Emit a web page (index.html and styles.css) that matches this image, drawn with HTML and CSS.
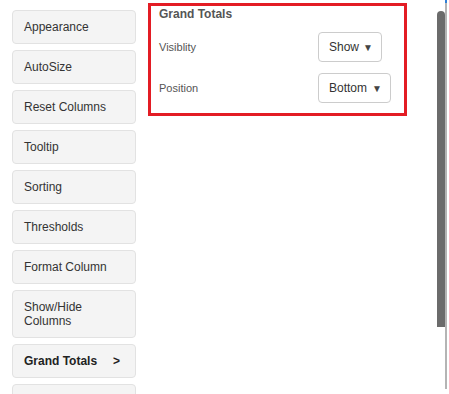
FILE: index.html
```html
<!DOCTYPE html>
<html lang="en">
<head>
    <meta charset="UTF-8">
    <meta name="viewport" content="width=device-width, initial-scale=1.0">
    <title>Table Settings</title>
    <link rel="stylesheet" href="styles.css">
</head>
<body>
    <div class="layout">
        <div class="sidebar">
            <div class="menu-item">Appearance</div>
            <div class="menu-item">AutoSize</div>
            <div class="menu-item">Reset Columns</div>
            <div class="menu-item">Tooltip</div>
            <div class="menu-item">Sorting</div>
            <div class="menu-item">Thresholds</div>
            <div class="menu-item">Format Column</div>
            <div class="menu-item">Show/Hide Columns</div>
            <div class="menu-item active"><span>Grand Totals</span><span>&gt;</span></div>
            <div class="menu-item empty"></div>
        </div>

        <div class="panel">
            <h2>Grand Totals</h2>
            <div class="form-row">
                <label>Visiblity</label>
                <div class="select-box show-select"><span>Show</span><span class="arrow">&#9660;</span></div>
            </div>
            <div class="form-row">
                <label>Position</label>
                <div class="select-box pos-select"><span>Bottom</span><span class="arrow">&#9660;</span></div>
            </div>
        </div>

        <div class="scrollbar">
            <div class="thumb"></div>
            <div class="track"></div>
        </div>
    </div>
</body>
</html>
```

FILE: styles.css
```css
body {
    font-family: "Liberation Sans", Arial, sans-serif;
    margin: 0;
    padding: 0;
    height: 394px;
    overflow: hidden;
    background: #fff;
    color: #333;
}

.layout {
    display: flex;
    align-items: flex-start;
    padding-left: 12px;
}

.sidebar {
    width: 124px;
    margin-top: 10px;
    display: flex;
    flex-direction: column;
    gap: 6px;
}

.menu-item {
    display: flex;
    justify-content: space-between;
    padding: 9px 15px 9px 11px;
    font-size: 12px;
    line-height: 14px;
    background: #f4f4f4;
    border: 1px solid #e2e2e2;
    border-radius: 4px;
    color: #333;
}

.menu-item.empty {
    height: 14px;
}

.menu-item.active {
    font-weight: bold;
    color: #222;
}

.panel {
    width: 259px;
    box-sizing: border-box;
    margin-left: 12px;
    margin-top: 3px;
    border: 3px solid #e31c24;
    padding: 1px 8px 10px;
}

h2 {
    margin: 0 0 11px;
    font-size: 12px;
    line-height: 14px;
    color: #555;
}

.form-row {
    display: grid;
    grid-template-columns: 159px auto;
    align-items: center;
    margin-top: 11px;
}

h2 + .form-row {
    margin-top: 0;
}

label {
    font-size: 11px;
    color: #555;
}

.select-box {
    box-sizing: border-box;
    height: 30px;
    display: flex;
    justify-content: space-between;
    align-items: center;
    padding: 0 8px 0 10px;
    border: 1px solid #ccc;
    border-radius: 4px;
    font-size: 12px;
    color: #333;
}

.show-select {
    width: 64px;
}

.pos-select {
    width: 73px;
}

.arrow {
    font-size: 10px;
    color: #444;
}

.scrollbar {
    margin-left: 30px;
    display: flex;
    align-items: flex-start;
}

.thumb {
    width: 8px;
    height: 316px;
    margin-top: 11px;
    background: #6b6b6b;
    border-radius: 4px 4px 0 0;
}

.track {
    width: 2px;
    height: 386px;
    background: #b4b4b4;
    border-top: 3px solid #2f7fd6;
}
```
